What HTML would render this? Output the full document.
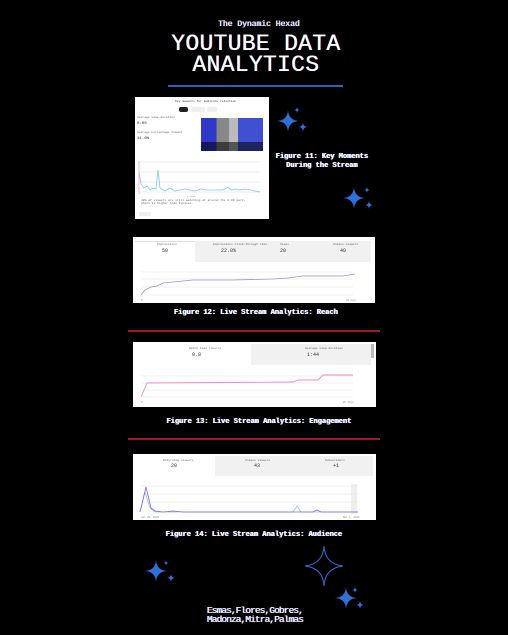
<!DOCTYPE html>
<html><head><meta charset="utf-8"><style>
body{margin:0;width:508px;height:635px;background:#000;position:relative;overflow:hidden;font-family:"Liberation Mono",monospace;color:#fff}
.a{position:absolute}
.c{text-align:center}
.cap{font-size:7px;font-weight:bold;color:#fff;text-shadow:-0.5px 0 #5cf,0.5px 0 #f6a}
.img{background:#fff;position:absolute}
.t{font-size:3px;color:#666;position:absolute}
</style></head><body>
<div class="a c" style="left:0;width:518px;top:20px;font-size:8px;color:#eee;text-shadow:-0.5px 0 #5cf,0.5px 0 #f6a">The Dynamic Hexad</div>
<div class="a c" style="left:0;width:512px;top:34px;font-size:23px;line-height:21px;letter-spacing:0.3px;text-shadow:-0.5px 0 #4cf,0.5px 0 #f46">YOUTUBE DATA<br>ANALYTICS</div>
<div class="a" style="left:168px;top:85px;width:175px;height:2px;background:#2d5fc0"></div>

<!-- Fig 11 -->
<div class="img" style="left:135px;top:97px;width:134px;height:122px">
<div class="t" style="left:40px;top:3px;color:#333">Key moments for audience retention</div>
<div class="a" style="left:44px;top:10px;width:9px;height:5px;background:#222;border-radius:2px"></div>
<div class="a" style="left:56px;top:10px;width:14px;height:5px;background:#eee;border-radius:2px"></div>
<div class="a" style="left:72px;top:10px;width:10px;height:5px;background:#eee;border-radius:2px"></div>
<div class="t" style="left:2px;top:19px">Average view duration</div>
<div class="t" style="left:2px;top:25px;font-size:4px;color:#222">0:00</div>
<div class="t" style="left:2px;top:34px">Average percentage viewed</div>
<div class="t" style="left:2px;top:40px;font-size:4px;color:#222">11.6%</div>
<div class="a" style="left:66px;top:21px;width:62px;height:33px;background:linear-gradient(90deg,#3038c8 0 25%,#888 25% 45%,#bbb 45% 60%,#4050d0 60% 100%)"></div>
<div class="a" style="left:66px;top:45px;width:62px;height:9px;background:rgba(0,0,0,.55)"></div>
<svg class="a" style="left:0;top:55px" width="134" height="67">
<line x1="4" y1="10" x2="125" y2="10" stroke="#ddd" stroke-width=".5"/>
<line x1="4" y1="20" x2="125" y2="20" stroke="#ddd" stroke-width=".5"/>
<line x1="4" y1="30" x2="125" y2="30" stroke="#ddd" stroke-width=".5"/>
<line x1="4" y1="40" x2="125" y2="40" stroke="#ddd" stroke-width=".5"/>
<line x1="4" y1="9" x2="4" y2="42" stroke="#f88" stroke-width=".6"/>
<polyline fill="none" stroke="#7cc8e8" stroke-width=".8" points="4,20 6,32 9,36 12,34 15,38 18,36 21,37 23,18 25,36 30,39 35,36 40,39 45,38 50,37 55,38 60,39 66,37 72,38 80,38 88,38 93,35 96,38 100,37 104,38 110,37 116,38 120,39 125,40"/>
<text x="52" y="45" font-size="2" fill="#888">1:13:08</text>
</svg>
<div class="t" style="left:6px;top:102px;width:110px">48% of viewers are still watching at around the 0:00 mark, which is higher than typical.</div>
<div class="a" style="left:4px;top:115px;width:12px;height:4px;background:#eee;border-radius:2px"></div>
</div>
<div class="a c cap" style="left:272px;width:100px;top:153px;line-height:9px">Figure 11: Key Moments<br>During the Stream</div>

<!-- Fig 12 -->
<div class="img" style="left:133px;top:237px;width:242px;height:66px">
<div class="a" style="left:62px;top:4px;width:176px;height:21px;background:#f1f1f1"></div>
<div class="a" style="left:2px;top:4px;width:60px;height:21px;background:#fff;border-top:1px solid #ddd"></div>
<div class="t" style="left:24px;top:6px">Impressions</div><div class="a" style="left:29px;top:11px;font-size:5px;color:#333">50</div>
<div class="t" style="left:80px;top:6px">Impressions click-through rate</div><div class="a" style="left:88px;top:11px;font-size:5px;color:#333">22.0%</div>
<div class="t" style="left:147px;top:6px">Views</div><div class="a" style="left:147px;top:11px;font-size:5px;color:#333">20</div>
<div class="t" style="left:200px;top:6px">Unique viewers</div><div class="a" style="left:207px;top:11px;font-size:5px;color:#333">40</div>
<svg class="a" style="left:0;top:28px" width="242" height="38">
<g stroke="#e4e4e4" stroke-width=".5"><line x1="8" y1="7" x2="220" y2="7"/><line x1="8" y1="14" x2="220" y2="14"/><line x1="8" y1="22" x2="220" y2="22"/><line x1="8" y1="30" x2="220" y2="30"/></g>
<polyline fill="none" stroke="#9a8ee8" stroke-width=".8" points="8,30 12,25 18,22 24,21 30,18 40,17 60,15 100,15 140,14 155,13 170,11 210,11 222,9"/>
<text x="8" y="36" font-size="2.5" fill="#888">0</text><text x="213" y="36" font-size="2.5" fill="#888">28 days</text>
</svg>
</div>
<div class="a c cap" style="left:0;width:512px;top:309px">Figure 12: Live Stream Analytics: Reach</div>
<div class="a" style="left:128px;top:330px;width:252px;height:2px;background:#9c1a26"></div>

<!-- Fig 13 -->
<div class="img" style="left:133px;top:342px;width:243px;height:65px">
<div class="a" style="left:118px;top:2px;width:120px;height:21px;background:#f1f1f1"></div>
<div class="a" style="left:238px;top:2px;width:3px;height:14px;background:#bbb"></div>
<div class="t" style="left:56px;top:5px">Watch time (hours)</div><div class="a" style="left:59px;top:10px;font-size:5px;color:#333">0.8</div>
<div class="t" style="left:172px;top:5px">Average view duration</div><div class="a" style="left:174px;top:10px;font-size:5px;color:#333">1:44</div>
<svg class="a" style="left:0;top:25px" width="243" height="40">
<g stroke="#e4e4e4" stroke-width=".5"><line x1="8" y1="9" x2="220" y2="9"/><line x1="8" y1="16" x2="220" y2="16"/><line x1="8" y1="23" x2="220" y2="23"/><line x1="8" y1="30" x2="220" y2="30"/></g>
<polyline fill="none" stroke="#f28ac8" stroke-width=".9" points="8,30 14,16 160,15 165,13 185,13 190,8 220,8"/>
<text x="8" y="36" font-size="2.5" fill="#888">0</text><text x="210" y="36" font-size="2.5" fill="#888">28 days</text>
</svg>
</div>
<div class="a c cap" style="left:0;width:518px;top:418px">Figure 13: Live Stream Analytics: Engagement</div>
<div class="a" style="left:128px;top:438px;width:252px;height:2px;background:#9c1a26"></div>

<!-- Fig 14 -->
<div class="img" style="left:133px;top:454px;width:243px;height:66px">
<div class="a" style="left:82px;top:2px;width:158px;height:20px;background:#f1f1f1"></div>
<div class="t" style="left:30px;top:5px">Returning viewers</div><div class="a" style="left:38px;top:9px;font-size:5px;color:#333">20</div>
<div class="t" style="left:112px;top:5px">Unique viewers</div><div class="a" style="left:121px;top:9px;font-size:5px;color:#333">43</div>
<div class="t" style="left:192px;top:5px">Subscribers</div><div class="a" style="left:200px;top:9px;font-size:5px;color:#333">+1</div>
<svg class="a" style="left:0;top:24px" width="243" height="42">
<rect x="218" y="6" width="6" height="30" fill="#eee"/>
<g stroke="#e4e4e4" stroke-width=".5"><line x1="8" y1="8" x2="225" y2="8"/><line x1="8" y1="16" x2="225" y2="16"/><line x1="8" y1="24" x2="225" y2="24"/></g>
<polyline fill="none" stroke="#7ccbe8" stroke-width=".8" points="7,34 12,14 17,30 22,34 160,34 164,28 168,34 225,34"/>
<polyline fill="none" stroke="#9060e0" stroke-width=".8" points="7,34 13,9 18,30 22,33 30,34 40,33 50,34 100,34 180,34 184,32 188,34 225,34"/>
<text x="8" y="40" font-size="2.5" fill="#888">Jan 28, 2025</text><text x="210" y="40" font-size="2.5" fill="#888">Mar 1, 2025</text>
</svg>
</div>
<div class="a c cap" style="left:0;width:508px;top:531px">Figure 14: Live Stream Analytics: Audience</div>

<!-- stars -->
<svg class="a" style="left:0;top:0" width="508" height="635">
<defs><path id="s" d="M0,-10 Q0.6,-0.6 10,0 Q0.6,0.6 0,10 Q-0.6,0.6 -10,0 Q-0.6,-0.6 0,-10Z"/></defs>
<g fill="#2f6fd8">
<use href="#s" transform="translate(288,121) scale(1.1)"/>
<use href="#s" transform="translate(297,110) scale(.3)"/>
<use href="#s" transform="translate(303,127) scale(.45)"/>
<use href="#s" transform="translate(354,198) scale(1.1)"/>
<use href="#s" transform="translate(367,190) scale(.3)"/>
<use href="#s" transform="translate(369,205) scale(.4)"/>
<use href="#s" transform="translate(156,571) scale(1.1)"/>
<use href="#s" transform="translate(166,563) scale(.28)"/>
<use href="#s" transform="translate(171,578) scale(.4)"/>
<use href="#s" transform="translate(346,598) scale(1.1)"/>
<use href="#s" transform="translate(355,590) scale(.3)"/>
<use href="#s" transform="translate(360,605) scale(.4)"/>
</g>
<path d="M324,546 Q325,564 343,566 Q325,568 324,586 Q323,568 305,566 Q323,564 324,546Z" fill="none" stroke="#2f6fd8" stroke-width="1"/>
</svg>

<div class="a c" style="left:180px;width:150px;top:606px;font-size:9.5px;line-height:9px;color:#eee;text-shadow:-0.5px 0 #4cf,0.5px 0 #f6a;letter-spacing:-0.9px">Esmas,Flores,Gobres,<br>Madonza,Mitra,Palmas</div>
</body></html>
